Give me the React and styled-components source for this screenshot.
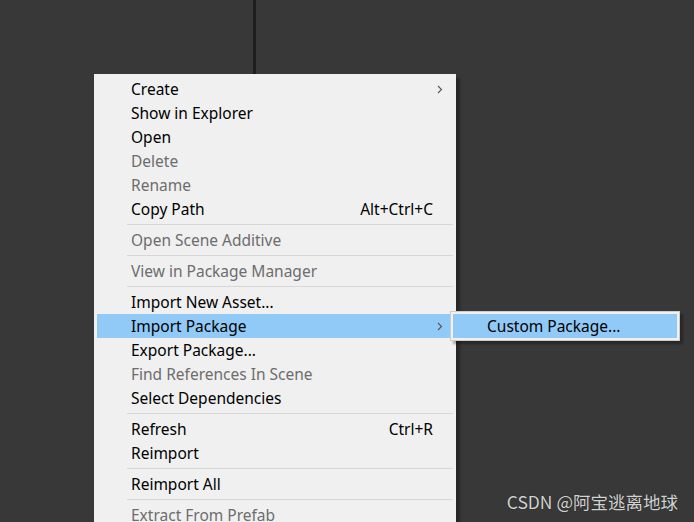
import React from 'react';
import styled, { createGlobalStyle } from 'styled-components';

const GlobalStyle = createGlobalStyle`
  html, body {
    margin: 0;
    padding: 0;
    background: #383838;
  }
  body {
    font-family: "Noto Sans", "Noto Sans CJK SC", sans-serif;
  }
`;

const Screen = styled.div`
  position: relative;
  width: 694px;
  height: 522px;
  overflow: hidden;
  display: flex;
  background: #383838;
`;

const Pane = styled.div`
  width: ${(p) => p.width || 'auto'};
  flex: ${(p) => (p.width ? 'none' : '1')};
  background: #383838;
`;

const Divider = styled.div`
  width: 3px;
  background: #1e1e1e;
`;

const Menu = styled.div`
  position: absolute;
  left: 94px;
  top: 74px;
  width: 362px;
  box-sizing: border-box;
  padding: 3px;
  background: #f0f0f0;
  box-shadow: 4px 4px 2px rgba(0, 0, 0, 0.3);
  display: flex;
  flex-direction: column;
`;

const Row = styled.div`
  position: relative;
  height: 24px;
  display: flex;
  align-items: center;
  padding: 0 20px 0 34px;
  font-size: 15.5px;
  color: ${(p) => (p.disabled ? '#6d6d6d' : '#000')};
  background: ${(p) => (p.active ? '#91c9f7' : 'transparent')};
`;

const Label = styled.span`
  flex: 1;
  white-space: nowrap;
`;

const Shortcut = styled.span`
  white-space: nowrap;
`;

const Arrow = styled.svg`
  position: absolute;
  right: 10px;
  top: 8px;
`;

const Separator = styled.div`
  height: 7px;
  display: flex;
  align-items: center;
  padding-left: 30px;

  &::after {
    content: '';
    flex: 1;
    height: 1px;
    background: #d7d7d7;
  }
`;

const SubMenu = styled.div`
  position: absolute;
  left: 450px;
  top: 311px;
  width: 230px;
  box-sizing: border-box;
  padding: 2px;
  background: #f0f0f0;
  border: 1px solid #cccccc;
  box-shadow: 3px 3px 2px rgba(0, 0, 0, 0.3);
`;

const SubItem = styled(Row)`
  padding-left: 34px;
`;

const Watermark = styled.div`
  position: absolute;
  right: 16px;
  bottom: 8px;
  font-family: "Noto Sans CJK SC", "Noto Sans", sans-serif;
  font-size: 17.5px;
  color: #d2d2d2;
  text-shadow: 0 0 1px rgba(0, 0, 0, 0.6);
`;

const Chevron = () => (
  <Arrow width="6" height="9" viewBox="0 0 6 9">
    <polyline points="1,1 4.5,4.5 1,8" fill="none" stroke="#555" strokeWidth="1.1" />
  </Arrow>
);

const items = [
  { label: 'Create', sub: true },
  { label: 'Show in Explorer' },
  { label: 'Open' },
  { label: 'Delete', disabled: true },
  { label: 'Rename', disabled: true },
  { label: 'Copy Path', shortcut: 'Alt+Ctrl+C' },
  'sep',
  { label: 'Open Scene Additive', disabled: true },
  'sep',
  { label: 'View in Package Manager', disabled: true },
  'sep',
  { label: 'Import New Asset...' },
  { label: 'Import Package', sub: true, active: true },
  { label: 'Export Package...' },
  { label: 'Find References In Scene', disabled: true },
  { label: 'Select Dependencies' },
  'sep',
  { label: 'Refresh', shortcut: 'Ctrl+R' },
  { label: 'Reimport' },
  'sep',
  { label: 'Reimport All' },
  'sep',
  { label: 'Extract From Prefab', disabled: true },
];

export default function App() {
  return (
    <>
      <GlobalStyle />
      <Screen>
        <Pane width="253px" />
        <Divider />
        <Pane />
        <Menu>
          {items.map((it, i) =>
            it === 'sep' ? (
              <Separator key={i} />
            ) : (
              <Row key={i} disabled={it.disabled} active={it.active}>
                <Label>{it.label}</Label>
                {it.shortcut && <Shortcut>{it.shortcut}</Shortcut>}
                {it.sub && <Chevron />}
              </Row>
            )
          )}
        </Menu>
        <SubMenu>
          <SubItem active>
            <Label>Custom Package...</Label>
          </SubItem>
        </SubMenu>
        <Watermark>CSDN @阿宝逃离地球</Watermark>
      </Screen>
    </>
  );
}
